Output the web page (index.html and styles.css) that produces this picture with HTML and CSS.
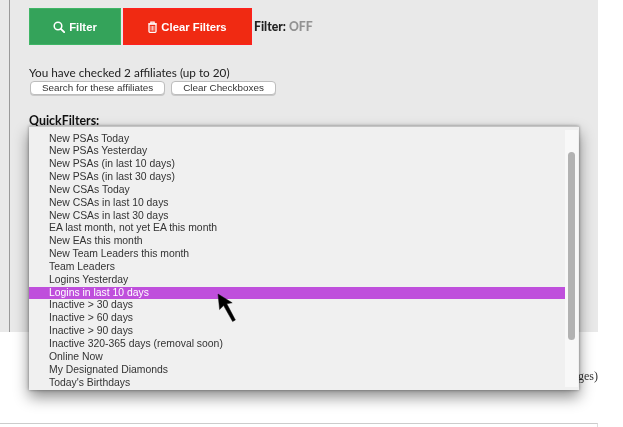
FILE: index.html
```html
<!DOCTYPE html>
<html lang="en">
<head>
<meta charset="utf-8">
<title>QuickFilters</title>
<link rel="stylesheet" href="styles.css">
</head>
<body>
<main class="panel">
  <div class="panel-inner">
    <div class="actions">
      <button class="btn btn-filter">
        <svg class="icon" viewBox="0 0 12 12"><circle cx="5" cy="5" r="3.8" fill="none" stroke="#fff" stroke-width="1.5"/><path d="M7.8 7.8L11.2 11.2" stroke="#fff" stroke-width="1.9" stroke-linecap="round"/></svg>
        Filter
      </button>
      <button class="btn btn-clear">
        <svg class="icon icon-trash" viewBox="0 0 9 12"><path d="M.3 2.8h8.4M2.8 2.6V1.1h3.4v1.5" fill="none" stroke="#fff" stroke-width="1.1"/><path d="M1 3.2h7v7a1.2 1.2 0 0 1-1.2 1.2H2.2A1.2 1.2 0 0 1 1 10.2z" fill="none" stroke="#fff" stroke-width="1.3"/><path d="M3.1 5v4.6M4.5 5v4.6M5.9 5v4.6" stroke="#fff" stroke-width=".7"/></svg>
        Clear Filters
      </button>
      <span class="status">Filter: <b class="status-off">OFF</b></span>
    </div>
    <p class="checked">You have checked 2 affiliates (up to 20)</p>
    <div class="check-actions">
      <button class="pill pill-search">Search for these affiliates</button>
      <button class="pill pill-clear">Clear Checkboxes</button>
    </div>
    <h2 class="quick-title">QuickFilters:</h2>
  </div>
</main>
<div class="note">(all pages)</div>
<div class="rule"></div>

<div class="menu">
  <ul class="menu-list">
    <li>New PSAs Today</li>
    <li>New PSAs Yesterday</li>
    <li>New PSAs (in last 10 days)</li>
    <li>New PSAs (in last 30 days)</li>
    <li>New CSAs Today</li>
    <li>New CSAs in last 10 days</li>
    <li>New CSAs in last 30 days</li>
    <li>EA last month, not yet EA this month</li>
    <li>New EAs this month</li>
    <li>New Team Leaders this month</li>
    <li>Team Leaders</li>
    <li>Logins Yesterday</li>
    <li class="selected">Logins in last 10 days</li>
    <li>Inactive &gt; 30 days</li>
    <li>Inactive &gt; 60 days</li>
    <li>Inactive &gt; 90 days</li>
    <li>Inactive 320-365 days (removal soon)</li>
    <li>Online Now</li>
    <li>My Designated Diamonds</li>
    <li>Today's Birthdays</li>
  </ul>
  <div class="scrollbar"><div class="thumb"></div></div>
</div>

<svg class="cursor" viewBox="0 0 20 30"><path d="M1 1L2.6 16.5L6.6 12.6L15.6 28.5L18.4 27L9.8 10.8L15.2 9.8z" fill="#000" stroke="#111" stroke-width=".5"/></svg>
</body>
</html>
```
FILE: styles.css
```css
* { box-sizing: border-box; }
html, body { margin: 0; padding: 0; background: #fff; }
body {
  width: 623px;
  height: 427px;
  overflow: hidden;
  position: relative;
  font-family: Lato, "Liberation Sans", sans-serif;
  color: #222;
  filter: blur(.3px);
}
.panel {
  width: 598px;
  height: 332px;
  background: #e9e9e9;
  padding-left: 9px;
}
.panel-inner {
  height: 100%;
  border-left: 1px solid #9a9a9a;
  padding: 8px 0 0 19px;
}
.actions { display: flex; align-items: center; height: 37px; gap: 2px; }
.btn {
  height: 37px;
  display: flex;
  align-items: center;
  justify-content: center;
  gap: 4px;
  padding: 0;
  color: #fff;
  font: 700 11.3px "Liberation Sans", sans-serif;
  border: 1px solid;
  border-radius: 0;
}
.btn-filter { width: 92px; background: #34a35a; border-color: #3fb566; }
.btn-clear { width: 129px; background: #f02a12; border-color: #ff1f1f; }
.icon { width: 12px; height: 12px; }
.icon-trash { width: 9px; }
.status { font-size: 12.2px; font-weight: 900; color: #222; white-space: pre; }
.status-off { color: #929292; font-weight: 900; }
.checked { margin: 20px 0 0; font-size: 11.75px; line-height: 15px; color: #222; }
.check-actions { display: flex; gap: 6px; margin-top: 1px; padding-left: 1px; }
.pill {
  height: 14px;
  padding: 0;
  background: #fff;
  border: 1px solid #bdbdbd;
  border-radius: 4px;
  font: 9.9px/12px "Liberation Sans", sans-serif;
  color: #333;
  box-shadow: 0 1px 0 #c8c8c8;
}
.pill-search { width: 135px; }
.pill-clear { width: 105px; }
.quick-title { margin: 18px 0 0; font-size: 12.4px; line-height: 15px; font-weight: 700; color: #111; }
.note {
  position: absolute;
  top: 368px;
  left: 0;
  width: 598px;
  text-align: right;
  font: 12px/16px "Liberation Serif", serif;
  color: #333;
}
.rule {
  position: absolute;
  top: 423px;
  left: 0;
  width: 598px;
  height: 4px;
  border-top: 1px solid #ccc;
  border-right: 1px solid #ddd;
}
.menu {
  position: absolute;
  left: 29px;
  top: 126px;
  width: 550px;
  height: 264px;
  background: #f0f0f0;
  border-top: 1px solid #c4c4c4;
  box-shadow: 0 7px 14px rgba(0,0,0,.45), 0 0 3px rgba(0,0,0,.4);
  overflow: hidden;
  display: flex;
}
.menu-list {
  list-style: none;
  margin: 5.5px 0 0;
  padding: 0;
  width: 536px;
  font: 10.4px/12.85px "Liberation Sans", sans-serif;
  color: #333;
}
.menu-list li { height: 12.85px; padding-left: 20px; white-space: nowrap; }
.menu-list li.selected { background: #bf4fdc; color: #fff; }
.scrollbar {
  width: 13px;
  margin: 3px 1px 3px 0;
  background: #f8f8f8;
  padding: 22px 3px 0;
}
.thumb { width: 7px; height: 188px; border-radius: 4px; background: #b2b2b2; }
.cursor {
  position: absolute;
  left: 217px;
  top: 293px;
  width: 20px;
  height: 30px;
}
```
